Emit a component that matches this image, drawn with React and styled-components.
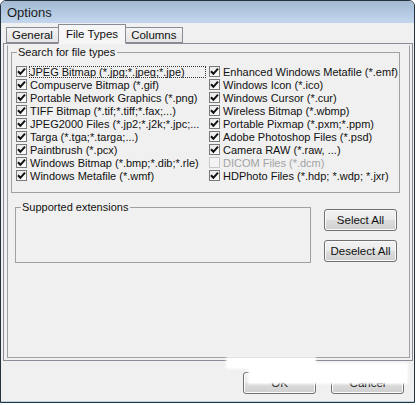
import styled, { createGlobalStyle } from 'styled-components';

const GlobalStyle = createGlobalStyle`
  html, body {
    margin: 0;
    background: #ffffff;
  }
  body {
    font-family: "Liberation Sans", Arial, sans-serif;
    font-size: 11px;
    color: #000;
  }
`;

const leftTypes = [
  { label: 'JPEG Bitmap (*.jpg;*.jpeg;*.jpe)', focus: true },
  { label: 'Compuserve Bitmap (*.gif)' },
  { label: 'Portable Network Graphics (*.png)' },
  { label: 'TIFF Bitmap (*.tif;*.tiff;*.fax;...)' },
  { label: 'JPEG2000 Files (*.jp2;*.j2k;*.jpc;...' },
  { label: 'Targa (*.tga;*.targa;...)' },
  { label: 'Paintbrush (*.pcx)' },
  { label: 'Windows Bitmap (*.bmp;*.dib;*.rle)' },
  { label: 'Windows Metafile (*.wmf)' },
];

const rightTypes = [
  { label: 'Enhanced Windows Metafile (*.emf)' },
  { label: 'Windows Icon (*.ico)' },
  { label: 'Windows Cursor (*.cur)' },
  { label: 'Wireless Bitmap (*.wbmp)' },
  { label: 'Portable Pixmap (*.pxm;*.ppm)' },
  { label: 'Adobe Photoshop Files (*.psd)' },
  { label: 'Camera RAW (*.raw, ...)' },
  { label: 'DICOM Files (*.dcm)', disabled: true },
  { label: 'HDPhoto Files (*.hdp; *.wdp; *.jxr)' },
];

const Window = styled.div`
  position: relative;
  width: 413px;
  height: 401px;
  border: 1px solid #22323f;
  border-radius: 6px 6px 0 0;
  background: #f0f0f0;
  display: flex;
  flex-direction: column;
  overflow: hidden;
  box-shadow: inset 0 -1px 0 #b9d4dc;
`;

const TitleBar = styled.div`
  height: 22px;
  flex: 0 0 auto;
  display: flex;
  align-items: center;
  padding-left: 6px;
  background: linear-gradient(#a3b9d2 0%, #b3c9e1 50%, #c3d6ed 100%);
  font-size: 13px;
  color: #1b1b1b;
`;

const Body = styled.div`
  flex: 1;
  display: flex;
  flex-direction: column;
  padding: 0 1px 0 2px;
`;

const TabStrip = styled.div`
  display: flex;
  align-items: flex-end;
  height: 20px;
  padding-left: 3px;
  position: relative;
  z-index: 1;
`;

const Tab = styled.div`
  height: ${({ $active }) => ($active ? '20px' : '16px')};
  padding: 0 ${({ $active }) => ($active ? '7px' : '5px')};
  margin: 0 ${({ $active }) => ($active ? '-1px' : '0')};
  box-sizing: border-box;
  border: 1px solid #898c95;
  border-bottom: ${({ $active }) => ($active ? '1px solid #f6f6f6' : '1px solid #898c95')};
  margin-bottom: ${({ $active }) => ($active ? '-1px' : '0')};
  background: ${({ $active }) =>
    $active ? '#f6f6f6' : 'linear-gradient(#f3f3f3, #e4e4e4)'};
  display: flex;
  align-items: center;
  font-size: 11.5px;
  color: #111;
  z-index: ${({ $active }) => ($active ? 2 : 1)};
`;

const Panel = styled.div`
  height: 318px;
  box-sizing: border-box;
  border: 1px solid #898c95;
  padding: 1px 3px 2px 3px;
  display: flex;
`;

const PageFrame = styled.div`
  flex: 1;
  border: 1px solid #a0a0a0;
  border-top-color: transparent;
  padding: 0 3px;
  display: flex;
  flex-direction: column;
`;

const Group = styled.fieldset`
  margin: 0;
  padding: 0;
  border: 1px solid #a0a0a0;
  min-width: 0;
  box-sizing: border-box;

  legend {
    margin-left: 5px;
    padding: 0 2px 0 1px;
    font-size: 11px;
    line-height: 12px;
    color: #111;
  }
`;

const SearchGroup = styled(Group)`
  margin-right: 6px;
  height: 147px;
`;

const TypeGrid = styled.div`
  display: grid;
  grid-template-columns: 193px 1fr;
  padding: 7px 0 0 4px;
`;

const Column = styled.div`
  display: flex;
  flex-direction: column;
`;

const Row = styled.label`
  height: 13px;
  display: flex;
  align-items: center;
  gap: 2px;
  color: ${({ $disabled }) => ($disabled ? '#a3a3a3' : '#111')};
`;

const Box = styled.span`
  width: 11px;
  height: 11px;
  flex: 0 0 11px;
  box-sizing: border-box;
  border: 1px solid ${({ $disabled }) => ($disabled ? '#c8c8c8' : '#7a7a7a')};
  background: ${({ $disabled }) =>
    $disabled ? '#f4f4f4' : 'linear-gradient(135deg, #e6e6e6, #ffffff)'};
  display: flex;
  align-items: center;
  justify-content: center;
`;

const Label = styled.span`
  width: 175px;
  padding: 0 1px;
  white-space: nowrap;
  overflow: hidden;
  line-height: 12px;
  outline: ${({ $focus }) => ($focus ? '1px dotted #333' : 'none')};
  outline-offset: -1px;
`;

const LowerRow = styled.div`
  display: flex;
  align-items: flex-start;
  margin-top: 8px;
`;

const ExtGroup = styled(Group)`
  margin-left: 4px;
  width: 296px;
  height: 62px;
`;

const ButtonStack = styled.div`
  display: flex;
  flex-direction: column;
  align-items: flex-start;
  gap: 9px;
  margin-left: 13px;
  margin-top: 8px;
`;

const Button = styled.button`
  width: 73px;
  height: 22px;
  box-sizing: border-box;
  border: 1px solid #707070;
  border-radius: 3px;
  background: linear-gradient(#f2f2f2 0%, #ebebeb 48%, #dddddd 52%, #cfcfcf 100%);
  box-shadow: inset 0 0 0 1px #fbfbfb;
  font-family: "Liberation Sans", Arial, sans-serif;
  font-size: 11.5px;
  color: #111;
  padding: 0;
`;

const Footer = styled.div`
  flex: 1;
  display: flex;
  justify-content: flex-end;
  align-items: flex-start;
  gap: 15px;
  padding: 11px 9px 0 0;
`;

const Smudge = styled.div`
  position: absolute;
  background: #ffffff;
  filter: blur(1px);
`;

const Check = () => (
  <svg width="9" height="9" viewBox="0 0 9 9">
    <path d="M1 4.2 L3.4 6.8 L8 1.6" fill="none" stroke="#111" strokeWidth="2" />
  </svg>
);

const TypeRow = ({ item }) => (
  <Row $disabled={item.disabled}>
    <Box $disabled={item.disabled}>{!item.disabled && <Check />}</Box>
    <Label $focus={item.focus}>{item.label}</Label>
  </Row>
);

export default function App() {
  return (
    <>
      <GlobalStyle />
      <Window>
        <TitleBar>Options</TitleBar>
        <Body>
          <TabStrip>
            <Tab>General</Tab>
            <Tab $active>File Types</Tab>
            <Tab>Columns</Tab>
          </TabStrip>
          <Panel>
            <PageFrame>
              <SearchGroup>
                <legend>Search for file types</legend>
                <TypeGrid>
                  <Column>
                    {leftTypes.map((t) => (
                      <TypeRow key={t.label} item={t} />
                    ))}
                  </Column>
                  <Column>
                    {rightTypes.map((t) => (
                      <TypeRow key={t.label} item={t} />
                    ))}
                  </Column>
                </TypeGrid>
              </SearchGroup>
              <LowerRow>
                <ExtGroup>
                  <legend>Supported extensions</legend>
                </ExtGroup>
                <ButtonStack>
                  <Button>Select All</Button>
                  <Button>Deselect All</Button>
                </ButtonStack>
              </LowerRow>
            </PageFrame>
          </Panel>
          <Footer>
            <Button>OK</Button>
            <Button>Cancel</Button>
          </Footer>
        </Body>
        <Smudge style={{ left: 225, top: 356, width: 90, height: 12 }} />
        <Smudge style={{ left: 247, top: 362, width: 160, height: 21 }} />
      </Window>
    </>
  );
}
